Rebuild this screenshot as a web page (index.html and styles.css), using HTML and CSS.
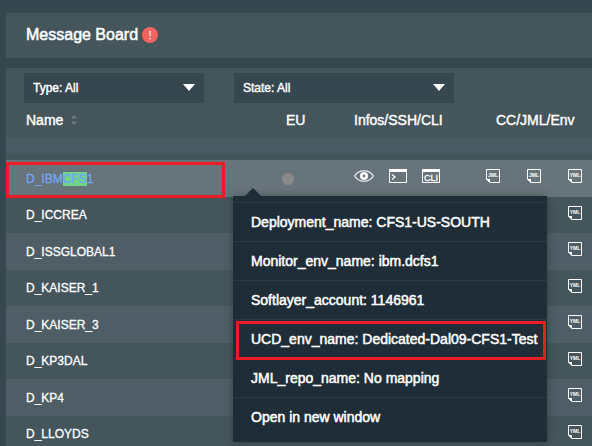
FILE: index.html
```html
<!DOCTYPE html>
<html lang="en">
<head>
<meta charset="utf-8">
<title>Message Board</title>
<link rel="stylesheet" href="styles.css">
</head>
<body>
<svg class="sprite" aria-hidden="true">
  <symbol id="eye" viewBox="0 0 20 12">
    <path d="M.6 6C5.200 -1 14.800 -1 19.400 6C14.800 13 5.200 13 .6 6Z" fill="none" stroke="#fff" stroke-width="1.100"/>
    <circle cx="10" cy="6" r="2.700" fill="none" stroke="#fff" stroke-width="2.600"/>
  </symbol>
  <symbol id="terminal" viewBox="0 0 18 14">
    <path d="M.5 .5H17.500V13.500H.5Z" fill="none" stroke="#fff"/>
    <path d="M0 0H18V3H0Z" fill="#fff"/>
    <path d="M3 5.500L6 8L3 10.500" fill="none" stroke="#fff" stroke-width="1.200"/>
  </symbol>
  <symbol id="cli" viewBox="0 0 18 14">
    <path d="M.5 .5H17.500V13.500H.5Z" fill="none" stroke="#fff"/>
    <path d="M0 0H18V3H0Z" fill="#fff"/>
    <text x="9" y="12" font-size="9" text-anchor="middle" fill="#fff" stroke="#fff" stroke-width=".3">CLI</text>
  </symbol>
  <symbol id="page" viewBox="0 0 14 14">
    <path d="M.5 .5H13.500V13.500H4L.5 10Z" fill="none" stroke="#fff"/>
    <path d="M0 10H4V14Z" fill="#fff"/>
  </symbol>
  <symbol id="jml" viewBox="0 0 14 14">
    <use href="#page"/>
    <text x="7" y="8" font-size="5" font-weight="bold" text-anchor="middle" fill="#fff">JML</text>
  </symbol>
  <symbol id="yml" viewBox="0 0 14 14">
    <use href="#page"/>
    <text x="7" y="8" font-size="5" font-weight="bold" text-anchor="middle" fill="#fff">YML</text>
  </symbol>
</svg>

<header class="board">
  <h1>Message Board</h1>
  <svg class="alert" viewBox="0 0 16 16" role="img" aria-label="Alert">
    <circle cx="8" cy="8" r="8" fill="#f1645f"/>
    <path d="M7.300 4H8.700L8.400 9.500H7.600ZM7.300 11H8.700V12.300H7.300Z" fill="#fff"/>
  </svg>
</header>

<main class="panel">
  <div class="filters">
    <div class="filter type">
      <select aria-label="Type"><option>Type: All</option></select>
      <svg class="arrow" viewBox="0 0 12 7" aria-hidden="true"><path d="M0 0H12L6 7Z" fill="#fff"/></svg>
    </div>
    <div class="filter state">
      <select aria-label="State"><option>State: All</option></select>
      <svg class="arrow" viewBox="0 0 12 7" aria-hidden="true"><path d="M0 0H12L6 7Z" fill="#fff"/></svg>
    </div>
  </div>

  <table>
    <colgroup><col><col class="col-eu"><col class="col-infos"><col class="col-env"></colgroup>
    <thead>
      <tr>
        <th class="name">Name <svg class="sort" viewBox="0 0 6 10" aria-hidden="true"><path d="M0 3.500L3 0L6 3.500ZM0 6.500L3 10L6 6.500Z" fill="#6c7a82"/></svg></th>
        <th class="eu">EU</th>
        <th class="infos">Infos/SSH/CLI</th>
        <th class="env">CC/JML/Env</th>
      </tr>
      <tr class="band"><td colspan="4"></td></tr>
      <tr class="space"><td colspan="4"></td></tr>
    </thead>
    <tbody>
      <tr class="selected">
        <td class="name"><a href="#">D_IBM<mark>CFS</mark>1</a><span class="outline row-outline"></span></td>
        <td class="eu">
          <span class="dot"></span>
          <ul class="menu">
            <li><button>Deployment_name: CFS1-US-SOUTH</button></li>
            <li><button>Monitor_env_name: ibm.dcfs1</button></li>
            <li><button>Softlayer_account: 1146961</button></li>
            <li><button>UCD_env_name: Dedicated-Dal09-CFS1-Test</button><span class="outline item-outline"></span></li>
            <li><button>JML_repo_name: No mapping</button></li>
            <li><button>Open in new window</button></li>
          </ul>
        </td>
        <td class="infos">
          <div class="tools">
            <button aria-label="View"><svg class="eye"><use href="#eye"/></svg></button>
            <button aria-label="SSH"><svg class="wide"><use href="#terminal"/></svg></button>
            <button aria-label="CLI"><svg class="wide"><use href="#cli"/></svg></button>
          </div>
        </td>
        <td class="env">
          <div class="files">
            <button aria-label="CC"><svg class="file"><use href="#jml"/></svg></button>
            <button aria-label="JML"><svg class="file"><use href="#jml"/></svg></button>
            <button aria-label="YML"><svg class="file"><use href="#yml"/></svg></button>
          </div>
        </td>
      </tr>
      <tr><td class="name">D_ICCREA</td><td></td><td></td><td class="env"><div class="files"><button aria-label="YML"><svg class="file"><use href="#yml"/></svg></button></div></td></tr>
      <tr><td class="name">D_ISSGLOBAL1</td><td></td><td></td><td class="env"><div class="files"><button aria-label="YML"><svg class="file"><use href="#yml"/></svg></button></div></td></tr>
      <tr><td class="name">D_KAISER_1</td><td></td><td></td><td class="env"><div class="files"><button aria-label="YML"><svg class="file"><use href="#yml"/></svg></button></div></td></tr>
      <tr><td class="name">D_KAISER_3</td><td></td><td></td><td class="env"><div class="files"><button aria-label="YML"><svg class="file"><use href="#yml"/></svg></button></div></td></tr>
      <tr><td class="name">D_KP3DAL</td><td></td><td></td><td class="env"><div class="files"><button aria-label="YML"><svg class="file"><use href="#yml"/></svg></button></div></td></tr>
      <tr><td class="name">D_KP4</td><td></td><td></td><td class="env"><div class="files"><button aria-label="YML"><svg class="file"><use href="#yml"/></svg></button></div></td></tr>
      <tr><td class="name">D_LLOYDS</td><td></td><td></td><td class="env"><div class="files"><button aria-label="YML"><svg class="file"><use href="#yml"/></svg></button></div></td></tr>
    </tbody>
  </table>
</main>
</body>
</html>
```
FILE: styles.css
```css
* {
  box-sizing: border-box;
}

body {
  display: flex;
  flex-direction: column;
  gap: 10px;
  height: 100vh;
  margin: 0;
  padding: 13px 0 0 6px;
  overflow: hidden;
  background: #374750;
  color: #fff;
  font-family: "Liberation Sans", Arial, sans-serif;
  font-size: 12px;
}

button,
select {
  border: 0;
  padding: 0;
  background: none;
  color: inherit;
  font: inherit;
}

svg {
  display: block;
}

.sprite {
  display: none;
}

.board {
  display: flex;
  flex-shrink: 0;
  align-items: center;
  gap: 4px;
  padding: 12px 20px 13px;
  background: #45555c;
}

h1 {
  margin: 0;
  font-size: 16px;
  font-weight: normal;
  line-height: 20px;
  -webkit-text-stroke: 0.5px #fff;
}

.alert {
  width: 16px;
  height: 16px;
}

.panel {
  flex: 1 0 auto;
  padding-top: 5px;
  background: #45555c;
}

.filters {
  display: flex;
  gap: 30px;
  padding-left: 18px;
}

.filter {
  position: relative;
  height: 30px;
  background: #374750;
}

.type {
  width: 180px;
}

.state {
  width: 220px;
}

select {
  width: 100%;
  height: 100%;
  padding-left: 9px;
  appearance: none;
  -webkit-text-stroke: 0.4px #fff;
}

.arrow {
  position: absolute;
  top: 11px;
  right: 9px;
  width: 12px;
  height: 7px;
  pointer-events: none;
}

table {
  width: 100%;
  border-collapse: collapse;
  table-layout: fixed;
}

.col-eu {
  width: 72px;
}

.col-infos {
  width: 132px;
}

.col-env {
  width: 112px;
}

th {
  height: 34px;
  padding: 0;
  font-size: 14px;
  font-weight: normal;
  text-align: left;
  white-space: nowrap;
  -webkit-text-stroke: 0.4px #fff;
}

td {
  position: relative;
  padding: 0;
}

.name {
  padding-left: 20px;
}

th.eu {
  padding-left: 10px;
}

td.eu {
  padding-left: 6px;
}

th.infos,
td.infos {
  padding-left: 6px;
}

th.env {
  padding-left: 16px;
}

td.env {
  padding-right: 10px;
}

.sort {
  display: inline-block;
  width: 6px;
  height: 10px;
  margin-left: 4px;
}

.band td {
  height: 16px;
  background: #4a5a62;
}

.space td {
  height: 7px;
}

tbody tr {
  height: 36px;
}

tbody tr:nth-child(odd) {
  height: 37px;
  background: #4f5d66;
}

tbody .selected.selected {
  background: #68747c;
}

tbody .name {
  -webkit-text-stroke: 0.3px currentColor;
}

a {
  color: #73a6f0;
  text-decoration: none;
}

mark {
  background: #70d587;
  color: inherit;
}

.dot {
  display: block;
  width: 12px;
  height: 12px;
  border-radius: 50%;
  background: #8b8987;
}

.tools {
  display: flex;
  align-items: center;
  gap: 15px;
  padding-bottom: 5px;
}

.files {
  display: flex;
  justify-content: flex-end;
  gap: 27px;
  padding-bottom: 5px;
}

.eye {
  width: 20px;
  height: 12px;
}

.wide {
  width: 18px;
  height: 14px;
}

.file {
  width: 14px;
  height: 14px;
}

.menu {
  position: absolute;
  top: 36px;
  left: -43px;
  z-index: 1;
  width: 314px;
  margin: 0;
  padding: 6px 0;
  background: #1e2d38;
  box-shadow: 0 0 8px rgba(0, 0, 0, 0.3);
  list-style: none;
}

.menu::before {
  position: absolute;
  top: -8px;
  left: 12px;
  width: 16px;
  height: 8px;
  background: #1e2d38;
  clip-path: polygon(50% 0, 100% 100%, 0 100%);
  content: "";
}

.menu li {
  position: relative;
  border-top: 1px solid #2b3b45;
}

.menu button {
  width: 100%;
  height: 38px;
  padding-left: 18px;
  font-size: 14px;
  text-align: left;
  white-space: nowrap;
  -webkit-text-stroke: 0.5px #fff;
}

.outline {
  position: absolute;
  z-index: 2;
  border: 3px solid #ed1c24;
  pointer-events: none;
}

.row-outline {
  top: 2px;
  right: 51px;
  left: 0;
  height: 36px;
}

.item-outline {
  top: 1px;
  right: 1px;
  left: 3px;
  height: 39px;
}
```
